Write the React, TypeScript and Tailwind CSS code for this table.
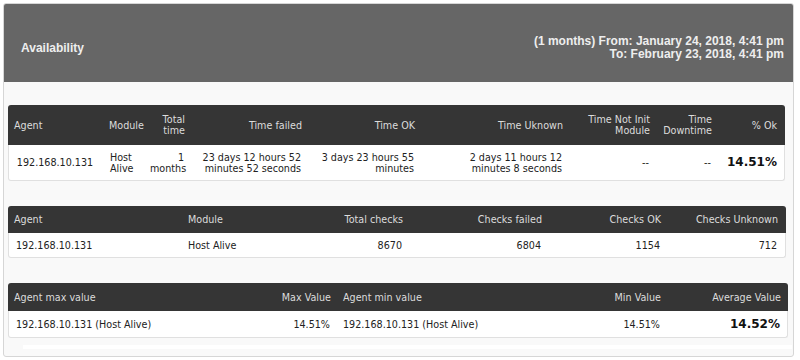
import React from "react";

const th = "text-right pr-[6px] self-center";
const td = "text-right pr-[7px] self-center";

export default function App() {
  return (
    <div className="w-[800px] h-[360px] bg-white p-[3px] font-['DejaVu_Sans',Verdana,sans-serif]">
      <div className="w-[791px] h-[354px] border border-[#d6d6d6] rounded-[3px] bg-[#f9f9f9] overflow-hidden flex flex-col">
        {/* Title bar */}
        <div className="h-[78px] shrink-0 bg-[#666666] flex items-center justify-between pt-[10px] pl-[17px] pr-[9px] font-['Liberation_Sans',Arial,sans-serif] font-bold text-[12px] text-[#eeeeee]">
          <div>Availability</div>
          <div className="text-right leading-[13px]">
            <div>(1 months) From: January 24, 2018, 4:41 pm</div>
            <div>To: February 23, 2018, 4:41 pm</div>
          </div>
        </div>

        <div className="pl-[4px] pt-[23px] flex flex-col text-[9.6px] leading-[11px]">
          {/* Table 1 */}
          <div className="w-[777px]">
            <div className="h-[40px] bg-[#353535] rounded-t-[3px] text-[#dcdcdc] grid grid-cols-[95px_47px_41px_117px_113px_148px_87px_62px_1fr]">
              <div className="self-center pl-[6px]">Agent</div>
              <div className="self-center pl-[6px]">Module</div>
              <div className={th}>Total<br />time</div>
              <div className={th}>Time failed</div>
              <div className={th}>Time OK</div>
              <div className={th}>Time Uknown</div>
              <div className={th}>Time Not Init<br />Module</div>
              <div className={th}>Time<br />Downtime</div>
              <div className="text-right pr-[8px] self-center">% Ok</div>
            </div>
            <div className="h-[36px] bg-white border border-t-0 border-[#e0e0e0] rounded-b-[3px] text-[#222222] grid grid-cols-[94px_47px_41px_117px_113px_148px_87px_62px_1fr]">
              <div className="self-center text-center pr-[2px]">192.168.10.131</div>
              <div className="self-center pl-[7px]">Host<br />Alive</div>
              <div className={td}>1<br />months</div>
              <div className={td}>23 days 12 hours 52<br />minutes 52 seconds</div>
              <div className={td}>3 days 23 hours 55<br />minutes</div>
              <div className={td}>2 days 11 hours 12<br />minutes 8 seconds</div>
              <div className={td}>--</div>
              <div className={td}>--</div>
              <div className="text-right pr-[7px] self-center font-bold text-[12px] text-[#111111]">14.51%</div>
            </div>
          </div>

          {/* Table 2 */}
          <div className="w-[778px] mt-[25px]">
            <div className="h-[27px] bg-[#353535] rounded-t-[3px] text-[#dcdcdc] grid grid-cols-[174px_148px_79px_139px_119px_1fr]">
              <div className="self-center pl-[6px]">Agent</div>
              <div className="self-center pl-[6px]">Module</div>
              <div className={th}>Total checks</div>
              <div className={th}>Checks failed</div>
              <div className={th}>Checks OK</div>
              <div className="text-right pr-[8px] self-center">Checks Unknown</div>
            </div>
            <div className="h-[25px] bg-white border border-t-0 border-[#e0e0e0] rounded-b-[3px] text-[#222222] grid grid-cols-[173px_148px_79px_139px_119px_1fr]">
              <div className="self-center pl-[7px]">192.168.10.131</div>
              <div className="self-center pl-[6px]">Host Alive</div>
              <div className={td}>8670</div>
              <div className={td}>6804</div>
              <div className={td}>1154</div>
              <div className="text-right pr-[8px] self-center">712</div>
            </div>
          </div>

          {/* Table 3 */}
          <div className="w-[780px] mt-[25px]">
            <div className="h-[28px] bg-[#353535] rounded-t-[3px] text-[#dcdcdc] grid grid-cols-[262px_67px_253px_77px_1fr]">
              <div className="self-center pl-[6px]">Agent max value</div>
              <div className={th}>Max Value</div>
              <div className="self-center pl-[6px]">Agent min value</div>
              <div className={th}>Min Value</div>
              <div className="text-right pr-[7px] self-center">Average Value</div>
            </div>
            <div className="h-[27px] bg-white border border-t-0 border-[#e0e0e0] rounded-b-[3px] text-[#222222] grid grid-cols-[261px_67px_253px_77px_1fr]">
              <div className="self-center pl-[7px]">192.168.10.131 (Host Alive)</div>
              <div className={td}>14.51%</div>
              <div className="self-center pl-[6px]">192.168.10.131 (Host Alive)</div>
              <div className={td}>14.51%</div>
              <div className="text-right pr-[7px] self-center font-bold text-[12px] text-[#111111]">14.52%</div>
            </div>
          </div>

          <div className="ml-[15px] mt-[7px] w-[769px] h-[4px] bg-white" />
        </div>
      </div>
    </div>
  );
}
